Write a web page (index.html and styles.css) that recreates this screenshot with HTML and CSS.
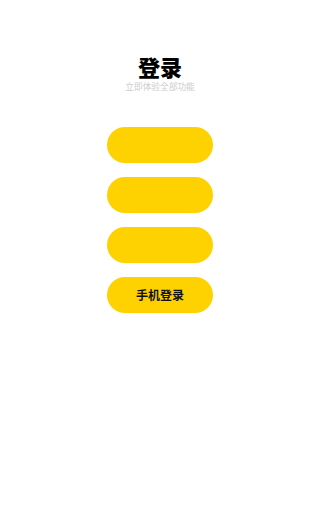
FILE: index.html
```html
<!DOCTYPE html>
<html lang="zh">

<head>
    <meta charset="UTF-8">
    <title>登录</title>
    <link rel="stylesheet" href="styles.css">
</head>

<body>
    <div class="login">
        <h1 class="title">登录</h1>
        <p class="sub">立即体验全部功能</p>
        <div class="btns">
            <div class="btn"></div>
            <div class="btn"></div>
            <div class="btn"></div>
            <div class="btn">手机登录</div>
        </div>
    </div>
</body>

</html>
```

FILE: styles.css
```css
* {
    padding: 0;
    margin: 0;
}

body {
    background: #fff;
    font-family: "Noto Sans CJK SC", "Liberation Sans", sans-serif;
}

.login {
    width: 320px;
    padding-top: 54px;
    text-align: center;
}

.title {
    font-size: 22px;
    line-height: 24px;
    font-weight: 900;
    color: #000;
}

.sub {
    margin-top: 3px;
    font-size: 8.7px;
    line-height: 12px;
    color: #cccccc;
}

.btns {
    display: flex;
    flex-direction: column;
    align-items: center;
    gap: 14px;
    padding-top: 34px;
}

.btn {
    width: 106px;
    height: 36px;
    border-radius: 18px;
    background-color: #fed200;
    font-size: 12px;
    font-weight: bold;
    line-height: 36px;
    color: #111;
}
```
